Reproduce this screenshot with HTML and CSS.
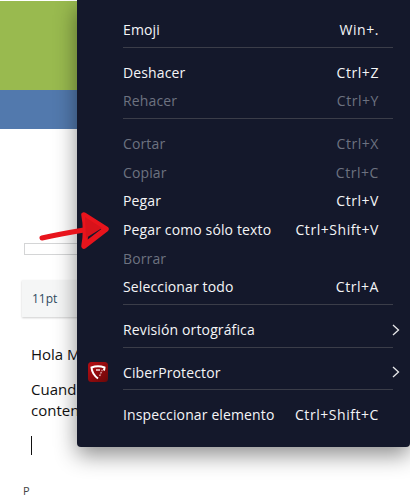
FILE: index.html
```html
<!DOCTYPE html>
<html lang="es">
<head>
<meta charset="utf-8">
<title>Menú contextual</title>
<link rel="stylesheet" href="styles.css">
</head>
<body>
<div class="page">
  <div class="band-green"></div>
  <div class="band-blue"></div>
  <div class="table-area"><div class="table-box"></div></div>
  <div class="toolbar">11pt</div>
  <div class="doc">
    <p>Hola M</p>
    <p>Cuand<br>conten</p>
    <div class="caret"></div>
  </div>
  <div class="tag">P</div>
</div>
<div class="menu">
  <div class="row"><span>Emoji</span><span class="key">Win+.</span></div>
  <div class="sep"></div>
  <div class="row"><span>Deshacer</span><span class="key">Ctrl+Z</span></div>
  <div class="row off"><span>Rehacer</span><span class="key">Ctrl+Y</span></div>
  <div class="sep"></div>
  <div class="row off"><span>Cortar</span><span class="key">Ctrl+X</span></div>
  <div class="row off"><span>Copiar</span><span class="key">Ctrl+C</span></div>
  <div class="row"><span>Pegar</span><span class="key">Ctrl+V</span></div>
  <div class="row"><span>Pegar como sólo texto</span><span class="key">Ctrl+Shift+V</span></div>
  <div class="row off"><span>Borrar</span></div>
  <div class="row"><span>Seleccionar todo</span><span class="key">Ctrl+A</span></div>
  <div class="sep"></div>
  <div class="row"><span>Revisión ortográfica</span><svg class="chev" width="8" height="12" viewBox="0 0 8 12"><path d="M1 1l5.500 5L1 11" fill="none" stroke="#e8e8ea" stroke-width="1.300"/></svg></div>
  <div class="sep"></div>
  <div class="row"><span>CiberProtector</span>
    <svg class="chev" width="8" height="12" viewBox="0 0 8 12"><path d="M1 1l5.500 5L1 11" fill="none" stroke="#e8e8ea" stroke-width="1.300"/></svg>
    <svg class="shield" width="20" height="20" viewBox="0 0 20 20">
      <defs><linearGradient id="g" x1="0" y1="0" x2="1" y2="1"><stop offset="0" stop-color="#b80d14"/><stop offset="1" stop-color="#6a0808"/></linearGradient></defs>
      <rect width="20" height="20" rx="3.500" fill="url(#g)"/>
      <path d="M15.800 8.500Q16.500 7 16.500 5.500Q10 3 3.500 5.500Q4 12 10 16.500" fill="none" stroke="#fff" stroke-width="2"/>
      <path d="M8 8h4M12.500 10.500l1 .5M11.500 13l1 .5M13.500 8.500h1" fill="none" stroke="#f3d9d9" stroke-width="1.500"/>
    </svg>
  </div>
  <div class="sep"></div>
  <div class="row"><span>Inspeccionar elemento</span><span class="key">Ctrl+Shift+C</span></div>
</div>
<svg class="arrow" width="120" height="60" viewBox="0 0 120 60">
  <path d="M42 38Q60 34 84 30" fill="none" stroke="#e8141c" stroke-width="5" stroke-linecap="round"/>
  <path d="M84 15L106 29L84 46Q87 30 84 15Z" fill="#14182b" stroke="#e8141c" stroke-width="5.500" stroke-linejoin="round"/>
  <path d="M85 17L102 28L86 38Z" fill="#d8121a"/>
</svg>
</body>
</html>
```
FILE: styles.css
```css
html, body {
  margin: 0;
  padding: 0;
  height: 497px;
  overflow: hidden;
  background: #fff;
}
body {
  position: relative;
  font-family: "Open Sans", "Noto Sans", sans-serif;
}
.page {
  display: flex;
  flex-direction: column;
  padding-top: 1px;
  color: #111;
}
.band-green {
  height: 89px;
  background: #99ba4f;
}
.band-blue {
  height: 39px;
  background: #5279ad;
}
.table-area {
  height: 126px;
  padding: 114px 0 0 24px;
  box-sizing: border-box;
}
.table-box {
  height: 12px;
  border: 1px solid #d4d5d6;
  box-sizing: border-box;
}
.toolbar {
  margin: 25px 0 0 22px;
  height: 37px;
  background: #f5f6f6;
  box-shadow: 0 1px 2px rgba(0, 0, 0, 0.2);
  padding-left: 10px;
  font-size: 12px;
  line-height: 37px;
  color: #2f4a60;
}
.doc {
  padding: 27px 0 0 31px;
  font-size: 15px;
  line-height: 21px;
}
.doc p {
  margin: 0 0 14px;
}
.caret {
  width: 1px;
  height: 19px;
  margin-top: 15px;
  background: #111;
}
.tag {
  margin: 29px 0 0 23px;
  font-size: 11px;
  line-height: 14px;
  color: #444;
}
.menu {
  position: absolute;
  top: 0;
  left: 77px;
  width: 333px;
  height: 447px;
  box-sizing: border-box;
  padding: 15.300px 31px 0 46px;
  background: #14182b;
  border-radius: 0 0 4px 4px;
  box-shadow: 0 8px 22px rgba(0, 0, 0, 0.45);
  color: #f4f5f7;
  font-size: 14px;
  letter-spacing: 0.13px;
}
.row {
  position: relative;
  display: flex;
  justify-content: space-between;
  align-items: center;
  height: 28.700px;
}
.key {
  letter-spacing: 0.55px;
}
.off {
  color: #6d7280;
}
.sep {
  height: 1px;
  margin: 2.800px -14px 10.100px 0;
  background: #3b3d49;
}
.chev {
  margin-right: -21px;
}
.shield {
  position: absolute;
  left: -35px;
  top: 4px;
}
.arrow {
  position: absolute;
  left: 0;
  top: 200px;
}
```
